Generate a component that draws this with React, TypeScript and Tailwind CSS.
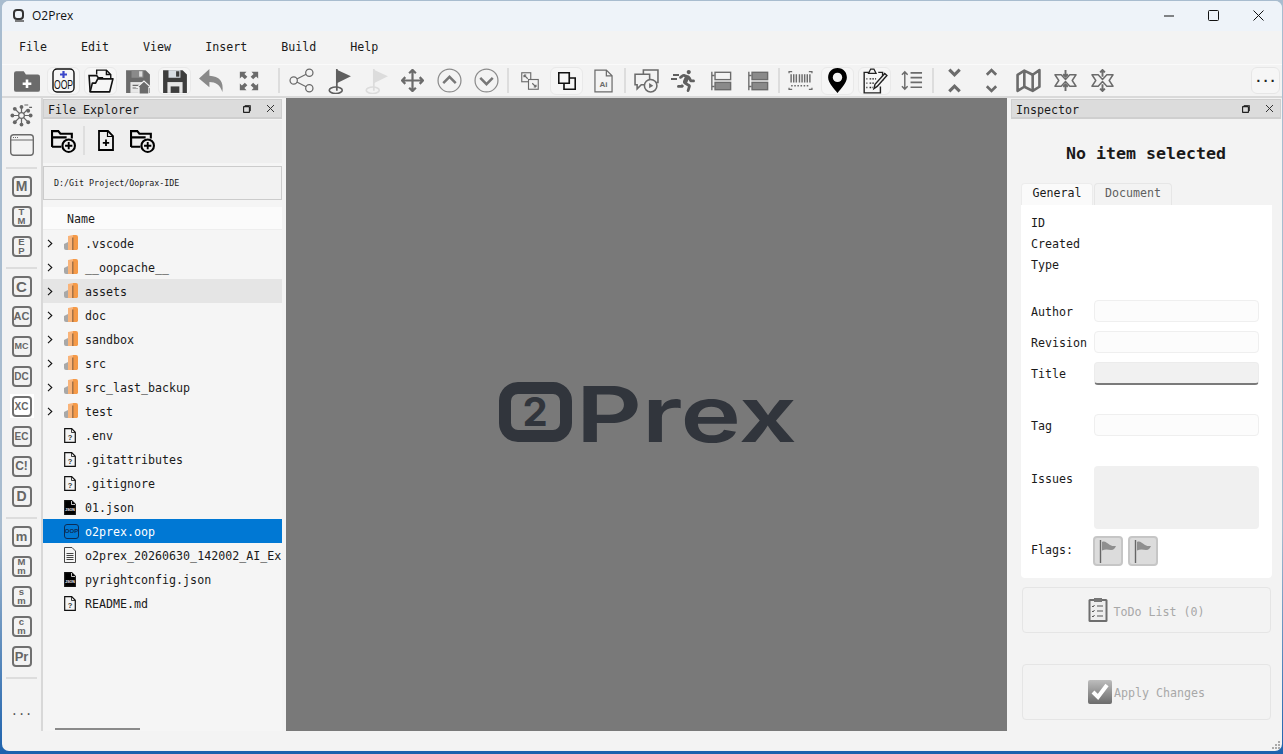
import type { ReactNode } from "react";
import { FaRunning } from "react-icons/fa";

const G = "#6b6b6b";

// Toolbar icons, all on a 24 box unless noted
const Svg = ({ children, size = 24 }: { children: ReactNode; size?: number }) => (
  <svg width={size} height={size} viewBox="0 0 24 24" fill="none">
    {children}
  </svg>
);

const FolderAdd = () => (
  <Svg size={26}>
    <path d="M0 5a2 2 0 0 1 2-2h7l2 3h11a2 2 0 0 1 2 2v12a2 2 0 0 1-2 2H2a2 2 0 0 1-2-2z" fill={G} />
    <path d="M12 10.500v8M8 14.500h8" stroke="#fff" strokeWidth="2.400" />
  </Svg>
);
const NewOop = () => (
  <svg width="23" height="25" viewBox="0 0 23 25" fill="none">
    <rect x="1" y="1" width="21" height="23" rx="4" stroke="#111" strokeWidth="1.400" />
    <path d="M11.500 3v7M8 6.500h7" stroke="#3b46c9" strokeWidth="2.200" />
    <text transform="translate(11.500 21) scale(.72 1)" textAnchor="middle" fontSize="12" fontFamily="Liberation Sans, sans-serif" fill="#111">OOP</text>
  </svg>
);
const OpenFolder = () => (
  <Svg size={26}>
    <path d="M2 22 1 7h7l1.500 2H14" stroke="#111" strokeWidth="1.500" />
    <path d="M8 6V2h9l4 4v4M17 2v4h4" stroke="#111" strokeWidth="1.300" />
    <path d="M2 22h18l3-12H9l-2 4H4z" stroke="#111" strokeWidth="1.500" strokeLinejoin="round" />
  </Svg>
);
const Floppy = ({ dark }: { dark?: boolean }) => (
  <Svg size={26}>
    <path d="M1 2h18l4 4v17H1z" fill={dark ? "#3d3d3d" : G} />
    <rect x="6" y="2" width="11" height="7" fill={dark ? "#d8dde3" : "#8a8a8a"} />
    <rect x="13" y="3" width="3" height="5" fill={dark ? "#3d3d3d" : "#dcdcdc"} />
    <rect x="5" y="13" width="14" height="10" fill={dark ? "#e6e6e6" : "#e8e8e8"} />
    {dark ? (
      <rect x="8" y="17" width="8" height="6" fill="#3d3d3d" />
    ) : (
      <>
        <path d="M7 16h7M7 18.500h5" stroke={G} />
        <path d="M13 24v-6h-2l6.500-6 6.500 6h-2v6z" fill={G} stroke="#f3f3f3" />
      </>
    )}
  </Svg>
);
const Undo = () => (
  <Svg size={25}>
    <path d="M10 1 0 10l10 8.500v-5c6 0 10 2.500 12.500 9.500 1.500-10-3-15-12.500-15.500z" fill="#8a8a8a" />
  </Svg>
);
const Fullscreen = () => (
  <Svg size={20}>
    <path d="M1 1h8L6.500 3.500 10 7 7 10 3.500 6.500 1 9zM23 1v8l-2.500-2.500L17 10l-3-3 3.500-3.500L15 1zM1 23v-8l2.500 2.500L7 14l3 3-3.500 3.500L9 23zM23 23h-8l2.500-2.500L14 17l3-3 3.500 3.500L23 15z" fill={G} />
  </Svg>
);
const Share = () => (
  <Svg size={25}>
    <circle cx="4.500" cy="12" r="3.500" stroke={G} strokeWidth="1.200" />
    <circle cx="19.500" cy="4.500" r="3.500" stroke={G} strokeWidth="1.200" />
    <circle cx="19.500" cy="19.500" r="3.500" stroke={G} strokeWidth="1.200" />
    <path d="M7.500 10.500l9-4.500M7.500 13.500l9 4.500" stroke={G} strokeWidth="1.200" />
  </Svg>
);
const RingFlag = ({ c }: { c: string }) => (
  <Svg size={26}>
    <path d="M10 1.500 23 7.500 10 14z" fill={c} />
    <path d="M10 1v20" stroke={c} strokeWidth="1.600" />
    <ellipse cx="9" cy="20.500" rx="6" ry="3" stroke={c} strokeWidth="1.500" />
  </Svg>
);
const MoveIcon = () => (
  <Svg size={23}>
    <path d="M12 1v22M1 12h22M8.500 4.500 12 1l3.500 3.500M8.500 19.500 12 23l3.500-3.500M4.500 8.500 1 12l3.500 3.500M19.500 8.500 23 12l-3.500 3.500" stroke={G} strokeWidth="2.300" />
  </Svg>
);
const CircleChevron = ({ up }: { up?: boolean }) => (
  <Svg size={25}>
    <circle cx="12" cy="12" r="11" stroke="#8c8c8c" strokeWidth="1.200" />
    <path d={up ? "M6 14.500l6-6 6 6" : "M6 9.500l6 6 6-6"} stroke="#777" strokeWidth="2.400" />
  </Svg>
);
const SwapSquares = () => (
  <Svg size={18}>
    <rect x="1" y="1" width="12" height="12" stroke={G} strokeWidth="1.500" />
    <rect x="10" y="10" width="13" height="13" stroke={G} strokeWidth="1.500" fill="#f3f3f3" />
    <path d="M4 4l5 5M4 4h3M4 4v3M20 20l-5-5M20 20h-3M20 20v-3" stroke={G} strokeWidth="1.500" />
  </Svg>
);
const OverlapSquares = () => (
  <Svg size={18}>
    <path d="M1 1h14v14H1z" stroke="#111" strokeWidth="2.200" />
    <path d="M15 8h8v15H8v-8" stroke="#111" strokeWidth="2.200" />
  </Svg>
);
const AiDoc = () => (
  <svg width="19" height="24" viewBox="0 0 20 25" fill="none">
    <path d="M1 1h12l6 6v17H1z" stroke={G} strokeWidth="1.300" />
    <path d="M13 1v6h6" stroke={G} strokeWidth="1.300" />
    <text x="10" y="18.500" textAnchor="middle" fontSize="8.500" fontWeight="700" fontFamily="Liberation Sans, sans-serif" fill={G}>Ai</text>
  </svg>
);
const ChatPlay = () => (
  <Svg size={25}>
    <path d="M1 6h14v10H7l-4 4v-4H1z" stroke={G} strokeWidth="1.500" />
    <path d="M9 6V2h14v12h-3" stroke={G} strokeWidth="1.500" />
    <circle cx="16" cy="17" r="6" stroke={G} strokeWidth="1.500" fill="#f3f3f3" />
    <path d="M14.500 14.500v5l4-2.500z" fill={G} />
  </Svg>
);
const Runner = () => (
  <div className="relative h-[22px] w-[22px] text-[#5f5f5f]">
    <FaRunning className="ml-[2px] h-[22px] w-[22px]" />
    <div className="absolute left-0 top-[4px] h-[2px] w-[6px] bg-[#5f5f5f]" />
    <div className="absolute left-[-2px] top-[8px] h-[2px] w-[6px] bg-[#5f5f5f]" />
  </div>
);
const AlignRows = ({ filled }: { filled?: boolean }) => (
  <Svg size={22}>
    <path d="M2 2v20M2 6h3M2 18h3" stroke={G} strokeWidth="1.500" />
    <rect x="5.500" y="2.500" width="17" height="8" stroke={G} strokeWidth="1.500" fill={filled ? "#8a8a8a" : "none"} />
    <rect x="5.500" y="13.500" width="17" height="8" stroke={G} strokeWidth="1.500" fill="#8a8a8a" />
  </Svg>
);
const Barcode = () => (
  <Svg size={25}>
    <path d="M1 5V3.500h3M20 3.500h3V5M1 19v1.500h3M20 20.500h3V19" stroke={G} strokeWidth="1.200" />
    <path d="M3 6v8M5.500 6v8M8 6v8M11 6v8M13.500 6v8M16 6v8M18.500 6v8M21 6v8" stroke={G} strokeWidth="1.400" />
    <path d="M3 17h18" stroke={G} strokeWidth="1.600" strokeDasharray="1.500 1.500" />
  </Svg>
);
const Pin = () => (
  <Svg size={25}>
    <path d="M12 0C6 0 3 4.500 3 9c0 5 5.500 10.500 9 15 3.500-4.500 9-10 9-15 0-4.500-3-9-9-9z" fill="#000" />
    <circle cx="12" cy="9" r="4.500" fill="#f3f3f3" />
  </Svg>
);
const NotesEdit = () => (
  <Svg size={26}>
    <path d="M15 4h4v8M9 4H2v19h15v-6" stroke="#222" strokeWidth="1.300" />
    <path d="M6 5l2-4h3l2 4z" stroke="#222" strokeWidth="1.200" fill="#f3f3f3" />
    <path d="M4 10h1M4 14h1M4 18h1M7 10h6M7 14h4M7 18h3" stroke="#222" strokeWidth="1.200" strokeDasharray="1.500 1" />
    <path d="M11 19l1-4L21 5l2 2-9 10z" stroke="#222" strokeWidth="1.300" fill="#f3f3f3" />
  </Svg>
);
const LineSpacing = () => (
  <Svg size={23}>
    <path d="M5 3v18M2 6l3-3 3 3M2 18l3 3 3-3" stroke={G} strokeWidth="1.500" />
    <path d="M11 4h12M11 9h12M11 14h12M11 19h12" stroke={G} strokeWidth="1.700" />
  </Svg>
);
const ChevCollapse = () => (
  <Svg size={25}>
    <path d="M7 1.500l5 5 5-5M7 22.500l5-5 5 5" stroke={G} strokeWidth="3" />
  </Svg>
);
const ChevExpand = () => (
  <Svg size={25}>
    <path d="M7.500 6.500 12 2l4.500 4.500M7.500 17.500 12 22l4.500-4.500" stroke={G} strokeWidth="2.600" />
  </Svg>
);
const MapIcon = () => (
  <Svg size={25}>
    <path d="M1.500 6.500 8 2.500l8 4 6.500-4.500v16L16 22l-8-4-6.500 4z" stroke={G} strokeWidth="2.500" strokeLinejoin="round" />
    <path d="M8 3v15M16 6.500V22" stroke={G} strokeWidth="2.500" />
  </Svg>
);
const Star = ({ out }: { out?: boolean }) => (
  <Svg size={23}>
    <path d="M1 6h6.500l4.500 5 4.500-5H23l-4 6 4 6h-6.500L12 13l-4.500 5H1l4-6z" stroke={G} strokeWidth="1.500" strokeLinejoin="round" />
    {out ? (
      <path d="M12 8V1M9.500 3.500 12 1l2.500 2.500M12 16v7M9.500 20.500 12 23l2.500-2.500" stroke={G} strokeWidth="2" />
    ) : (
      <path d="M12 1v7M9.500 5.500 12 8l2.500-2.500M12 23v-7M9.500 18.500 12 16l2.500 2.500" stroke={G} strokeWidth="2" />
    )}
  </Svg>
);

const Tool = ({ children, boxed }: { children: ReactNode; boxed?: boolean }) => (
  <div className={`mx-[2px] flex h-[28px] w-[33px] shrink-0 items-center justify-center rounded-[6px] border ${boxed ? "border-[#e9e9e9] bg-[#f6f6f6]" : "border-transparent"}`}>
    {children}
  </div>
);
const ToolSep = ({ wide }: { wide?: boolean }) => (
  <div className={`flex h-[25px] shrink-0 justify-center ${wide ? "w-[16px] pl-[8px]" : "w-[6px]"}`}>
    <div className="h-full w-[2px] bg-[#dddddd]" />
  </div>
);

function Toolbar() {
  return (
    <div className="flex h-[32px] items-center border-t border-[#fafafa] bg-[#f3f3f3] pl-[6px]">
      <Tool><FolderAdd /></Tool>
      <Tool boxed><NewOop /></Tool>
      <Tool boxed><OpenFolder /></Tool>
      <Tool><Floppy /></Tool>
      <Tool boxed><Floppy dark /></Tool>
      <Tool><Undo /></Tool>
      <Tool><Fullscreen /></Tool>
      <ToolSep wide />
      <Tool><Share /></Tool>
      <Tool><RingFlag c="#5f5f5f" /></Tool>
      <Tool><RingFlag c="#dcdcdc" /></Tool>
      <Tool><MoveIcon /></Tool>
      <Tool><CircleChevron up /></Tool>
      <Tool><CircleChevron /></Tool>
      <ToolSep />
      <Tool><SwapSquares /></Tool>
      <Tool boxed><OverlapSquares /></Tool>
      <Tool><AiDoc /></Tool>
      <ToolSep />
      <Tool><ChatPlay /></Tool>
      <Tool><Runner /></Tool>
      <Tool><AlignRows /></Tool>
      <Tool><AlignRows filled /></Tool>
      <ToolSep />
      <Tool><Barcode /></Tool>
      <Tool boxed><Pin /></Tool>
      <Tool boxed><NotesEdit /></Tool>
      <Tool><LineSpacing /></Tool>
      <ToolSep />
      <Tool><ChevCollapse /></Tool>
      <Tool><ChevExpand /></Tool>
      <Tool><MapIcon /></Tool>
      <Tool><Star /></Tool>
      <Tool><Star out /></Tool>
      <div className="ml-auto mr-[2px] flex h-[27px] w-[29px] items-center justify-center rounded-[6px] border border-[#e6e6e6] bg-[#f6f6f6] pb-[6px] text-[12px] font-bold leading-none text-[#222]">
        ...
      </div>
    </div>
  );
}

// Left rail. Stacked labels stay one text, broken over two lines
const Badge = ({ label, hover, size = 15 }: { label: string; hover?: boolean; size?: number }) => (
  <div className="flex h-[30px] w-[39px] items-center justify-center">
    <div className={`flex h-[24px] w-[24px] items-center justify-center ${hover ? "bg-white" : ""}`}>
      <div
        className="flex h-[21px] w-[20px] items-center justify-center whitespace-pre-line rounded-[4px] border-2 border-[#707070] text-center font-['Liberation_Sans',sans-serif] font-bold text-[#666666]"
        style={{ fontSize: size, lineHeight: label.includes("\n") ? "9px" : "17px" }}
      >
        {label}
      </div>
    </div>
  </div>
);
const RailSep = ({ top, bottom }: { top: number; bottom: number }) => (
  <div className="w-[31px]" style={{ paddingTop: top, paddingBottom: bottom }}>
    <div className="h-[2px] bg-[#dddddd]" />
  </div>
);

function Rail() {
  return (
    <div className="flex w-[41px] shrink-0 flex-col border-r-2 border-[#d8d8d8] bg-[#f3f3f3] pt-[2px]">
      <div className="flex w-[39px] flex-col items-center">
        <div className="flex h-[30px] items-center justify-center">
          <Svg size={23}>
            <g stroke="#666" strokeWidth="1.300">
              <circle cx="12" cy="12" r="3" />
              <path d="M12 9V3M12 15v6M9 12H3M15 12h6M10 10 5.500 5.500M14 14l4.500 4.500M14 10l4.500-4.500M10 14l-4.500 4.500" />
            </g>
            <g fill="#666">
              <circle cx="12" cy="3" r="2" /><circle cx="12" cy="21.500" r="2" />
              <circle cx="2.500" cy="12" r="2" /><circle cx="21.500" cy="12" r="2" />
              <circle cx="5" cy="5" r="2" /><circle cx="19" cy="19" r="2" />
              <circle cx="19" cy="7" r="2" /><circle cx="5" cy="19" r="2" />
            </g>
            <path d="M15 1h4M20 3.500h3" stroke="#666" strokeWidth="1.200" />
          </Svg>
        </div>
        <div className="flex h-[30px] items-center justify-center">
          <Svg size={24}>
            <rect x="0.700" y="1.700" width="22.600" height="20.600" rx="3" stroke="#6b6b6b" strokeWidth="1.400" />
            <path d="M1 7h22" stroke="#6b6b6b" strokeWidth="1.200" />
            <path d="M3 4.500h5" stroke="#6b6b6b" strokeWidth="1.200" strokeDasharray="1 1" />
          </Svg>
        </div>
        <RailSep top={7} bottom={2} />
        <Badge label="M" size={14} />
        <Badge label={"T\nM"} size={9.5} />
        <Badge label={"E\nP"} size={9.5} />
        <RailSep top={6} bottom={2} />
        <Badge label="C" size={15} />
        <Badge label="AC" size={11} />
        <Badge label="MC" size={9} />
        <Badge label="DC" size={10} />
        <Badge label="XC" size={10} hover />
        <Badge label="EC" size={10} />
        <Badge label="C!" size={12} />
        <Badge label="D" size={14} />
        <RailSep top={6} bottom={2} />
        <Badge label="m" size={13} />
        <Badge label={"M\nm"} size={9.5} />
        <Badge label={"s\nm"} size={9.5} />
        <Badge label={"c\nm"} size={9.5} />
        <Badge label="Pr" size={13} />
        <RailSep top={6} bottom={2} />
        <div className="mt-[24px] text-[12px] leading-none text-[#555]">...</div>
      </div>
    </div>
  );
}

const DockHeader = ({ title }: { title: string }) => (
  <div className="mt-px flex h-[20px] items-center justify-between border border-b-2 border-[#cfcfcf] bg-[#dcdcdc] pl-[4px] pr-[6px]">
    <span className="pt-[5px]">{title}</span>
    <div className="flex items-center gap-[15px]">
      <svg width="8" height="8" viewBox="0 0 8 8" fill="none" stroke="#222">
        <rect x="0.500" y="1.500" width="6" height="6" rx="1" strokeWidth="1.300" />
        <path d="M2 .5h5.500V6" strokeWidth=".8" />
      </svg>
      <svg width="9" height="9" viewBox="0 0 9 9" stroke="#333">
        <path d="M1 1l7 7M8 1 1 8" />
      </svg>
    </div>
  </div>
);

const FolderNew = () => (
  <Svg size={25}>
    <path d="M1 18V3h6l2 2.500h11V10" stroke="#000" strokeWidth="2" />
    <path d="M1 18V9h14M1 18h9" stroke="#000" strokeWidth="2" />
    <circle cx="17" cy="17" r="6" stroke="#000" strokeWidth="2" fill="#efefef" />
    <path d="M17 13.500v7M13.500 17h7" stroke="#000" strokeWidth="1.800" />
  </Svg>
);

// Tree icons
const TreeFolder = () => (
  <svg width="14" height="16" viewBox="0 0 14 16">
    <path d="M0 9l4-2v8H2a2 2 0 0 1-2-2z" fill="#a8a8a8" />
    <path d="M4 1 9 0v15H4z" fill="#f9b47a" />
    <path d="M9 0h3a2 2 0 0 1 2 2v12l-1 1H9z" fill="#f59a48" />
    <path d="M8.800 2.500V15" stroke="#8f6440" strokeWidth="1.200" />
  </svg>
);
const DocShape = ({ children, fill = "none" }: { children?: ReactNode; fill?: string }) => (
  <svg width="12" height="15" viewBox="0 0 12 15" fill="none">
    <path d="M.7.7h7l3.600 3.600v10H.7z" fill={fill} stroke="#111" strokeWidth="1.200" />
    <path d="M7.500 1v3.500H11" stroke={fill === "none" ? "#111" : "#f5f5f5"} strokeWidth=".8" />
    {children}
  </svg>
);
const Qmark = () => (
  <DocShape>
    <text x="6" y="12" textAnchor="middle" fontSize="7.500" fontWeight="700" fontFamily="Liberation Sans, sans-serif" fill="#333">?</text>
  </DocShape>
);
const JsonDoc = () => (
  <DocShape fill="#000">
    <text x="6" y="11" textAnchor="middle" fontSize="3.500" fontWeight="700" fontFamily="Liberation Sans, sans-serif" fill="#fff">JSON</text>
  </DocShape>
);
const TextDoc = () => (
  <svg width="12" height="16" viewBox="0 0 12 16" fill="none" stroke="#444">
    <path d="M.5.5h7.500l3.500 3.500v11.500H.5z" />
    <path d="M2.500 6.500h7M2.500 8.500h7M2.500 10.500h7M2.500 12.500h7" />
  </svg>
);
const OopDoc = () => (
  <div className="flex h-[15px] w-[15px] items-center justify-center rounded-[3px] border border-[#0c2c55] font-['Liberation_Sans',sans-serif] text-[6px] font-bold leading-none text-[#0c2c55]">
    OOP
  </div>
);

const rows: { name: string; kind: "dir" | "q" | "json" | "text" | "oop"; state?: "hover" | "sel" }[] = [
  { name: ".vscode", kind: "dir" },
  { name: "__oopcache__", kind: "dir" },
  { name: "assets", kind: "dir", state: "hover" },
  { name: "doc", kind: "dir" },
  { name: "sandbox", kind: "dir" },
  { name: "src", kind: "dir" },
  { name: "src_last_backup", kind: "dir" },
  { name: "test", kind: "dir" },
  { name: ".env", kind: "q" },
  { name: ".gitattributes", kind: "q" },
  { name: ".gitignore", kind: "q" },
  { name: "01.json", kind: "json" },
  { name: "o2prex.oop", kind: "oop", state: "sel" },
  { name: "o2prex_20260630_142002_AI_Ex", kind: "text" },
  { name: "pyrightconfig.json", kind: "json" },
  { name: "README.md", kind: "q" },
];

function TreeRow({ name, kind, state }: (typeof rows)[number]) {
  const bg = state === "sel" ? "bg-[#0078d4] text-white" : state === "hover" ? "bg-[#e5e5e5]" : "";
  return (
    <div className={`flex h-[24px] items-center whitespace-nowrap ${bg}`}>
      <div className="flex w-[10px] shrink-0 justify-end">
        {kind === "dir" && (
          <svg width="6" height="9" viewBox="0 0 6 9" fill="none" stroke="#111" strokeWidth="1.100">
            <path d="M1 .8 4.800 4.500 1 8.200" />
          </svg>
        )}
      </div>
      <div className="ml-[11px] flex w-[21px] shrink-0 items-center justify-start">
        {kind === "dir" && <TreeFolder />}
        {kind === "q" && <Qmark />}
        {kind === "json" && <JsonDoc />}
        {kind === "text" && <TextDoc />}
        {kind === "oop" && <OopDoc />}
      </div>
      <span className="pt-[4px]">{name}</span>
    </div>
  );
}

function Explorer() {
  return (
    <div className="flex w-[239px] shrink-0 flex-col bg-[#f5f5f5]">
      <DockHeader title="File Explorer" />
      <div className="mt-px flex h-[43px] items-center bg-[#efefef] pb-[2px] pl-[8px]">
        <FolderNew />
        <div className="ml-[7px] h-[29px] w-[2px] bg-[#dedede]" />
        <div className="ml-[10px] flex w-[22px] justify-center">
          <svg width="16" height="21" viewBox="0 0 16 21" fill="none" stroke="#000" strokeWidth="1.800">
            <path d="M1 1h9l5 5v14H1z" />
            <path d="M9.500 1v5.500H15" strokeWidth="1.200" />
            <path d="M8 9.500v6.500M4.800 12.800h6.400" />
          </svg>
        </div>
        <div className="ml-[13px]"><FolderNew /></div>
      </div>
      <div className="mt-[3px] flex h-[34px] items-center border border-[#cccccc] bg-[#f2f2f2] pl-[10px] text-[8.330px]">
        D:/Git Project/Ooprax-IDE
      </div>
      <div className="mt-[7px] flex h-[23px] items-center border-b border-[#eeeeee] bg-[#fbfbfb] pl-[24px] pt-[4px]">Name</div>
      <div className="flex-1 pt-px">
        {rows.map((r) => (
          <TreeRow key={r.name} {...r} />
        ))}
      </div>
      <div className="mb-[1px] ml-[12px] h-[2px] w-[85px] bg-[#8a8a8a]" />
    </div>
  );
}

// Logo is real text on a drawn frame
function Logo() {
  return (
    <div className="flex items-end pr-[2px] text-[#31353c]">
      <div className="flex h-[60px] w-[73px] items-center justify-center rounded-[19px] border-[12px] border-[#31353c]">
        <span className="font-['Inter',sans-serif] text-[40px] font-bold leading-none">2</span>
      </div>
      <span className="ml-[4px] inline-block w-[217px] origin-left scale-x-[1.33] font-['Inter',sans-serif] text-[77px] font-semibold leading-[56px]">Prex</span>
    </div>
  );
}

const Field = ({ label, children, className }: { label: string; children?: ReactNode; className?: string }) => (
  <div className={`flex items-start ${className ?? ""}`}>
    <span className="w-[63px] shrink-0">{label}</span>
    {children}
  </div>
);
const inputBox = "h-[22px] w-[165px] rounded-[4px] border border-[#efefef] bg-[#fcfcfc]";

const GreyFlag = () => (
  <div className="flex h-[30px] w-[30px] items-center justify-center rounded-[4px] border-2 border-[#c6c6c6] bg-[#dcdcdc]">
    <svg width="20" height="24" viewBox="0 0 20 24" fill="none">
      <path d="M2.500 1v23" stroke="#666" strokeWidth="1.400" />
      <path d="M4 3c3-1.500 5 1.500 8 3s4 1 6 1c-1 2-2 4-5 4-3-.5-6-1-9 .5z" fill="#8f8f8f" />
    </svg>
  </div>
);

function Inspector() {
  return (
    <div className="flex w-[270px] shrink-0 flex-col">
      <DockHeader title="Inspector" />
      <div className="flex h-[64px] items-center justify-center pt-[6px] text-[16.600px] font-bold">No item selected</div>
      <div className="ml-[10px] flex h-[22px] items-end gap-px">
        <div className="flex h-[22px] w-[72px] items-center justify-center rounded-t-[4px] border border-b-0 border-[#ececec] bg-[#fafafa] pb-px">General</div>
        <div className="flex h-[22px] w-[78px] items-center justify-center rounded-t-[4px] border border-b-0 border-[#e6e6e6] pb-px text-[#5f5f5f]">Document</div>
      </div>
      <div className="ml-[10px] w-[251px] rounded-b-[4px] bg-white px-[10px] pb-[12px] pt-[8px]">
        <div className="flex h-[21px] items-center">ID</div>
        <div className="flex h-[21px] items-center">Created</div>
        <div className="flex h-[21px] items-center">Type</div>
        <Field label="Author" className="mt-[24px] h-[22px] leading-[24px]"><div className={inputBox} /></Field>
        <Field label="Revision" className="mt-[9px] h-[22px] leading-[24px]"><div className={inputBox} /></Field>
        <Field label="Title" className="mt-[9px] h-[23px] leading-[24px]">
          <div className="h-[23px] w-[165px] rounded-[4px] border border-b-2 border-[#ececec] border-b-[#7a7a7a] bg-[#f1f1f1]" />
        </Field>
        <Field label="Tag" className="mt-[29px] h-[22px] leading-[24px]"><div className={inputBox} /></Field>
        <Field label="Issues" className="mt-[30px] leading-[26px]">
          <div className="h-[63px] w-[165px] rounded-[4px] bg-[#f0f0f0]" />
        </Field>
        <div className="mt-[7px] flex items-center">
          <span className="w-[62px] shrink-0">Flags:</span>
          <div className="flex gap-[5px]">
            <GreyFlag />
            <GreyFlag />
          </div>
        </div>
      </div>
      <div className="ml-[11px] mt-[9px] flex h-[46px] w-[249px] items-center justify-center gap-[5px] rounded-[4px] border border-[#e5e5e5] text-[#a8a8a8]">
        <svg width="20" height="24" viewBox="0 0 20 24" fill="none">
          <rect x=".5" y="1" width="19" height="23" rx="1.500" fill="#6e6e6e" />
          <rect x="2.500" y="3" width="15" height="19" fill="#eeeeee" />
          <rect x="6" y="0" width="8" height="4" fill="#777" />
          <path d="M4 8l1 1 1.500-2M4 13l1 1 1.500-2M4 18l1 1 1.500-2M9 8h6M9 13h6M9 18h6" stroke="#555" strokeWidth="1" />
        </svg>
        <span className="pt-[5px]">ToDo List (0)</span>
      </div>
      <div className="ml-[11px] mt-[31px] flex h-[56px] w-[249px] items-center justify-center gap-[2px] rounded-[4px] border border-[#e5e5e5] text-[#a8a8a8]">
        <div className="flex h-[24px] w-[24px] items-center justify-center rounded-[2px] bg-[linear-gradient(to_bottom,#bdbdbd,#6c6c6c)]">
          <svg width="20" height="18" viewBox="0 0 20 18" fill="none" stroke="#fff" strokeWidth="4">
            <path d="M3 9l5 5 9-12" />
          </svg>
        </div>
        <span className="pt-[4px]">Apply Changes</span>
      </div>
    </div>
  );
}

export default function App() {
  return (
    <div className="h-[754px] w-[1283px] overflow-hidden bg-[linear-gradient(to_bottom,#a8bccf_0%,#a8bccf_70%,#1d62ad_100%)] pl-[2px] pr-px pt-px font-['DejaVu_Sans_Mono',monospace] text-[11.650px] leading-none text-[#1a1a1a]">
      <div className="flex h-[750px] flex-col overflow-hidden rounded-[7px] bg-[#f3f3f3]">
        <div className="flex h-[30px] shrink-0 items-center justify-between bg-[#eef3f9]">
          <div className="flex items-center">
            <svg className="ml-[10px]" width="14" height="15" viewBox="0 0 14 15" fill="none">
              <rect x="2" y="1" width="9" height="9" rx="3" stroke="#333" strokeWidth="2" />
              <path d="M3 12h9" stroke="#555" strokeWidth="1.500" />
            </svg>
            <span className="ml-[6px] font-['Open_Sans',sans-serif] text-[12px] text-[#111]">O2Prex</span>
          </div>
          <div className="flex pb-px pr-px">
            <div className="flex h-[29px] w-[45px] items-center justify-center">
              <svg width="10" height="2" viewBox="0 0 10 2"><path d="M0 1h10" stroke="#111" /></svg>
            </div>
            <div className="flex h-[29px] w-[45px] items-center justify-center">
              <svg width="11" height="11" viewBox="0 0 11 11" fill="none"><rect x=".5" y=".5" width="10" height="10" rx="1" stroke="#111" /></svg>
            </div>
            <div className="flex h-[29px] w-[45px] items-center justify-center">
              <svg width="11" height="11" viewBox="0 0 11 11" stroke="#111"><path d="M.5.5l10 10M10.500.5l-10 10" /></svg>
            </div>
          </div>
        </div>
        <div className="flex h-[33px] shrink-0 items-center gap-[34px] pl-[17px]">
          {["File", "Edit", "View", "Insert", "Build", "Help"].map((m) => (
            <span key={m}>{m}</span>
          ))}
        </div>
        <Toolbar />
        <div className="flex h-[635px] border-t-2 border-[#d9d9d9]">
          <Rail />
          <Explorer />
          <div className="w-[4px] shrink-0" />
          <div className="flex flex-1 items-center justify-center bg-[#797979] pb-[6px]">
            <Logo />
          </div>
          <div className="w-[4px] shrink-0" />
          <Inspector />
          <div className="w-px shrink-0" />
        </div>
        <div className="flex h-[20px] shrink-0 items-end justify-end pb-[2px] pr-[2px]">
          <svg width="8" height="8" viewBox="0 0 8 8" fill="#aaa">
            <rect x="6" y="0" width="2" height="2" />
            <rect x="3" y="3" width="2" height="2" /><rect x="6" y="3" width="2" height="2" />
            <rect x="0" y="6" width="2" height="2" /><rect x="3" y="6" width="2" height="2" /><rect x="6" y="6" width="2" height="2" />
          </svg>
        </div>
      </div>
    </div>
  );
}
